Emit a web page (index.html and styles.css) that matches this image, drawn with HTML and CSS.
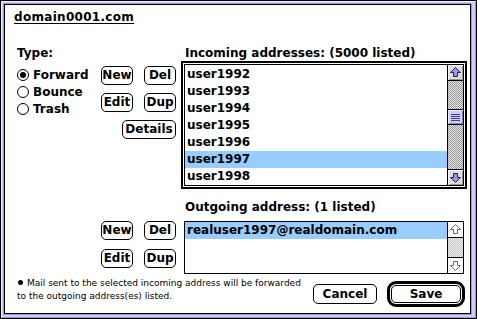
FILE: index.html
```html
<!DOCTYPE html>
<html>
<head>
  <title>domain0001.com</title>
  <link rel="stylesheet" href="styles.css">
</head>
<body>

  <div class="window">
    <div class="dialog">
      <h1 class="title">domain0001.com</h1>

      <div class="section top">
        <div class="left">
          <div class="label">Type:</div>
          <div class="type-row">
            <div class="radios">
              <label class="radio"><span class="dot checked"></span>Forward</label>
              <label class="radio"><span class="dot"></span>Bounce</label>
              <label class="radio"><span class="dot"></span>Trash</label>
            </div>
            <div class="btn-grid">
              <button class="btn">New</button>
              <button class="btn">Del</button>
              <button class="btn">Edit</button>
              <button class="btn">Dup</button>
              <button class="btn details">Details</button>
            </div>
          </div>
        </div>

        <div class="right">
          <div class="label">Incoming addresses: (5000 listed)</div>
          <div class="ring">
            <div class="listbox">
              <ul class="rows tall">
                <li>user1992</li>
                <li>user1993</li>
                <li>user1994</li>
                <li>user1995</li>
                <li>user1996</li>
                <li class="sel">user1997</li>
                <li>user1998</li>
              </ul>
              <div class="scrollbar">
                <div class="arrow up">
                  <svg width="15" height="15" viewBox="0 0 15 15"><path d="M7.5 2.5 L12.5 7.5 L9.5 7.5 L9.5 11.5 L5.5 11.5 L5.5 7.5 L2.5 7.5 Z"/></svg>
                </div>
                <div class="track">
                  <div class="thumb"><div class="grip"></div></div>
                </div>
                <div class="arrow down">
                  <svg width="15" height="15" viewBox="0 0 15 15"><path d="M7.5 12.5 L12.5 7.5 L9.5 7.5 L9.5 3.5 L5.5 3.5 L5.5 7.5 L2.5 7.5 Z"/></svg>
                </div>
              </div>
            </div>
          </div>
        </div>
      </div>

      <div class="section bottom">
        <div class="left">
          <div class="btn-grid">
            <button class="btn">New</button>
            <button class="btn">Del</button>
            <button class="btn">Edit</button>
            <button class="btn">Dup</button>
          </div>
        </div>

        <div class="right">
          <div class="label">Outgoing address: (1 listed)</div>
          <div class="listbox out">
            <ul class="rows short">
              <li class="sel">realuser1997@realdomain.com</li>
            </ul>
            <div class="scrollbar inactive">
              <div class="arrow up">
                <svg width="15" height="15" viewBox="0 0 15 15"><path d="M7.5 2.5 L12.5 7.5 L9.5 7.5 L9.5 11.5 L5.5 11.5 L5.5 7.5 L2.5 7.5 Z"/></svg>
              </div>
              <div class="track"></div>
              <div class="arrow down">
                <svg width="15" height="15" viewBox="0 0 15 15"><path d="M7.5 12.5 L12.5 7.5 L9.5 7.5 L9.5 3.5 L5.5 3.5 L5.5 7.5 L2.5 7.5 Z"/></svg>
              </div>
            </div>
          </div>
        </div>
      </div>

      <div class="footer">
        <p class="note"><span class="bullet"></span>Mail sent to the selected incoming address will be forwarded<br>to the outgoing address(es) listed.</p>
        <div class="actions">
          <button class="btn cancel">Cancel</button>
          <div class="default-ring">
            <button class="btn save">Save</button>
          </div>
        </div>
      </div>
    </div>
  </div>

</body>
</html>
```

FILE: styles.css
```css
body {
  margin: 0;
  font-family: "DejaVu Sans", sans-serif;
  font-size: 12px;
  font-weight: bold;
  color: #000;
  overflow: hidden;
}
.window {
  width: 477px;
  height: 319px;
  box-sizing: border-box;
  border: 1px solid #000;
  background: #ccccff;
  padding: 3px 5px 4px 3px;
  box-shadow: inset 1px 1px #eeeeff, inset -1px -1px #9999cc;
}
.dialog {
  height: 100%;
  box-sizing: border-box;
  border: 1px solid #000;
  background: #fff;
  box-shadow: 0 0 0 1px #9999cc;
  display: flex;
  flex-direction: column;
}
.title {
  margin: 5px 0 0 9px;
  font-size: 12px;
  line-height: 14px;
  letter-spacing: 0.3px;
  text-decoration: underline;
  text-underline-offset: 2px;
}
.section {
  display: grid;
  grid-template-columns: 164px 286px;
  padding-left: 12px;
}
.top {
  margin-top: 22px;
}
.bottom {
  margin-top: 11px;
}
.label {
  line-height: 14px;
  white-space: nowrap;
}
.right .label {
  padding-left: 4px;
}

/* type radios */
.type-row {
  display: flex;
  margin-top: 6px;
}
.radios {
  flex: 1;
  display: flex;
  flex-direction: column;
}
.radio {
  height: 17px;
  display: flex;
  align-items: center;
}
.dot {
  width: 12px;
  height: 12px;
  box-sizing: border-box;
  border: 1px solid #000;
  border-radius: 50%;
  margin-right: 4px;
  display: flex;
  align-items: center;
  justify-content: center;
}
.dot.checked::after {
  content: "";
  width: 6px;
  height: 6px;
  border-radius: 50%;
  background: #000;
}

/* buttons */
.btn {
  font: inherit;
  color: #000;
  background: #fff;
  border: 1px solid #000;
  border-radius: 5px;
  padding: 0;
  width: 32px;
  height: 19px;
  line-height: 17px;
  text-align: center;
}
.btn-grid {
  display: grid;
  grid-template-columns: 32px 32px;
  column-gap: 11px;
  row-gap: 8px;
  margin-right: 5px;
  align-content: start;
}
.btn.details {
  grid-column: 1 / -1;
  justify-self: end;
  width: 54px;
}
.bottom .left {
  display: flex;
  justify-content: flex-end;
}
.bottom .btn-grid {
  margin-top: 21px;
  row-gap: 9px;
}

/* lists */
.ring {
  margin-top: 1px;
  border: 2px solid #000;
  padding: 1px;
}
.listbox {
  border: 1px solid #000;
  display: flex;
}
.listbox.out {
  margin: 7px 0 0 3px;
  width: 280px;
  box-sizing: border-box;
}
.rows {
  flex: 1;
  list-style: none;
  margin: 0;
  padding: 0;
  overflow: hidden;
}
.rows.tall {
  height: 119px;
  padding-top: 1px;
}
.rows.short {
  height: 51px;
}
.rows li {
  height: 17px;
  line-height: 17px;
  padding-left: 2px;
  white-space: nowrap;
}
.rows li.sel {
  background: #99ccff;
}

/* scrollbar */
.scrollbar {
  width: 15px;
  border-left: 1px solid #000;
  display: flex;
  flex-direction: column;
}
.arrow {
  height: 15px;
  background: #dddddd;
  box-shadow: inset 1px 1px #fff, inset -1px -1px #999;
}
.arrow svg {
  display: block;
}
.arrow path {
  fill: #9999dd;
  stroke: #222255;
  stroke-width: 1;
}
.arrow.up {
  border-bottom: 1px solid #000;
}
.arrow.down {
  border-top: 1px solid #000;
}
.track {
  flex: 1;
  background: repeating-conic-gradient(#999 0 25%, #e4e4e4 0 50%) 0 0 / 2px 2px;
}
.thumb {
  margin-top: 28px;
  height: 14px;
  border-top: 1px solid #000;
  border-bottom: 1px solid #000;
  background: #ccccff;
  box-shadow: inset 1px 1px #eeeeff, inset -1px -1px #8888bb;
  display: flex;
  align-items: center;
  justify-content: center;
}
.grip {
  width: 9px;
  height: 7px;
  background: repeating-linear-gradient(#444477 0 1px, transparent 1px 2px);
}
.scrollbar.inactive .arrow {
  background: #fff;
  box-shadow: none;
}
.scrollbar.inactive .arrow path {
  fill: #fff;
  stroke: #666;
}
.scrollbar.inactive .track {
  background: repeating-conic-gradient(#c4c4c4 0 25%, #f0f0f0 0 50%) 0 0 / 2px 2px;
}

/* footer */
.footer {
  display: flex;
  justify-content: space-between;
  margin-top: 3px;
  padding: 0 5px 0 12px;
}
.note {
  margin: 0;
  font-size: 9px;
  font-weight: normal;
  line-height: 13px;
  white-space: nowrap;
}
.bullet {
  display: inline-block;
  width: 5px;
  height: 5px;
  border-radius: 50%;
  background: #000;
  margin: 0 4px 0 1px;
  vertical-align: 1px;
}
.actions {
  display: flex;
  align-items: center;
  gap: 10px;
  margin-top: 4px;
}
.btn.cancel {
  width: 64px;
  height: 20px;
  line-height: 18px;
}
.default-ring {
  border: 3px solid #000;
  border-radius: 9px;
  padding: 1px;
  display: flex;
}
.btn.save {
  width: 70px;
  height: 18px;
  line-height: 16px;
}
```
